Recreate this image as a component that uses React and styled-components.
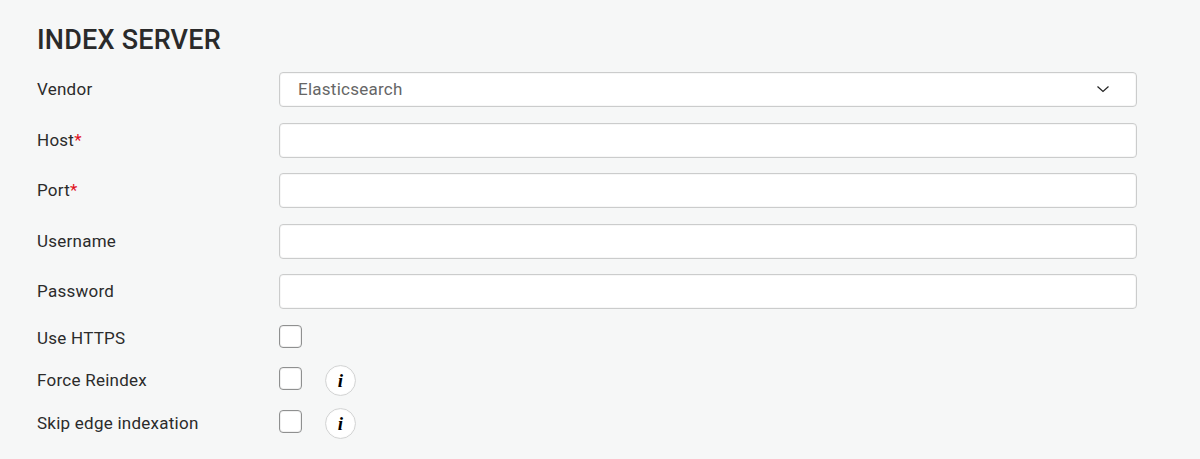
import React from "react";
import styled, { createGlobalStyle } from "styled-components";

const GlobalStyle = createGlobalStyle`
  html, body {
    margin: 0;
    background: #f6f7f7;
    font-family: Roboto, "Liberation Sans", sans-serif;
  }
`;

const FIELDS = [
  { label: "Host", required: true },
  { label: "Port", required: true },
  { label: "Username" },
  { label: "Password", type: "password" },
];

const CHECKS = [
  { label: "Use HTTPS" },
  { label: "Force Reindex", info: true },
  { label: "Skip edge indexation", info: true },
];

const App = () => {
  return (
    <Page>
      <GlobalStyle />
      <Title>INDEX SERVER</Title>
      <Fields>
        <FieldRow>
          <Label>Vendor</Label>
          <SelectBox>
            <span>Elasticsearch</span>
            <svg width="14" height="14" viewBox="0 0 14 14" fill="none">
              <path d="M1.5 4.5 L7 9.5 L12.5 4.5" stroke="#222" strokeWidth="1.2" />
            </svg>
          </SelectBox>
        </FieldRow>
        {FIELDS.map((field) => (
          <FieldRow key={field.label}>
            <Label>
              {field.label}
              {field.required && <Star>*</Star>}
            </Label>
            <Input type={field.type || "text"} />
          </FieldRow>
        ))}
      </Fields>
      <Checks>
        {CHECKS.map((check) => (
          <CheckRow key={check.label}>
            <Label>{check.label}</Label>
            <CheckBox type="checkbox" />
            {check.info && <InfoButton>i</InfoButton>}
          </CheckRow>
        ))}
      </Checks>
    </Page>
  );
};

export default App;

const Page = styled.div`
  width: 1200px;
  height: 459px;
  box-sizing: border-box;
  padding: 23px 63px 0 37px;
  overflow: hidden;
`;

const Title = styled.h2`
  margin: 0 0 15px;
  height: 34px;
  line-height: 34px;
  font-size: 27px;
  font-weight: 500;
  color: #2a2a2a;
  letter-spacing: 0.2px;
`;

const Fields = styled.div`
  display: flex;
  flex-direction: column;
  gap: 15.5px;
`;

const FieldRow = styled.div`
  display: grid;
  grid-template-columns: 242px 1fr;
  align-items: center;
  height: 35px;
`;

const Label = styled.label`
  font-size: 17px;
  letter-spacing: 0.25px;
  color: #2b2b2b;
  padding-bottom: 1px;
`;

const Star = styled.span`
  color: #e0101f;
`;

const Input = styled.input`
  box-sizing: border-box;
  width: 100%;
  height: 35px;
  padding: 0 18px;
  background: #fff;
  border: 1px solid #cbcccc;
  border-radius: 4px;
  box-shadow: inset 0 0 0 1px rgba(0, 0, 0, 0.03);
  outline: none;
`;

const SelectBox = styled.div`
  box-sizing: border-box;
  display: flex;
  align-items: center;
  justify-content: space-between;
  height: 35px;
  padding: 0 26px 1px 18px;
  background: #fff;
  border: 1px solid #cbcccc;
  border-radius: 4px;
  box-shadow: inset 0 0 0 1px rgba(0, 0, 0, 0.03);
  font-size: 17px;
  letter-spacing: 0.25px;
  color: #666;
`;

const Checks = styled.div`
  display: flex;
  flex-direction: column;
  gap: 11.5px;
  margin-top: 13.5px;
`;

const CheckRow = styled.div`
  display: grid;
  grid-template-columns: 242px 23px 31px;
  align-items: center;
  height: 31px;
`;

const CheckBox = styled.input`
  appearance: none;
  box-sizing: border-box;
  width: 23px;
  height: 23px;
  margin: 0 0 4px;
  background: #fff;
  border: 1px solid #8f9090;
  border-radius: 4px;
  box-shadow: inset 0 0 0 1px rgba(0, 0, 0, 0.06);
`;

const InfoButton = styled.button`
  box-sizing: border-box;
  width: 31px;
  height: 31px;
  margin-left: 23px;
  padding: 0;
  background: #fff;
  border: 1px solid #d3d4d4;
  border-radius: 50%;
  box-shadow: inset 0 0 0 1px rgba(0, 0, 0, 0.02);
  font-family: "Liberation Serif", serif;
  font-style: italic;
  font-weight: 700;
  font-size: 19px;
  line-height: 1;
  color: #000;
`;
